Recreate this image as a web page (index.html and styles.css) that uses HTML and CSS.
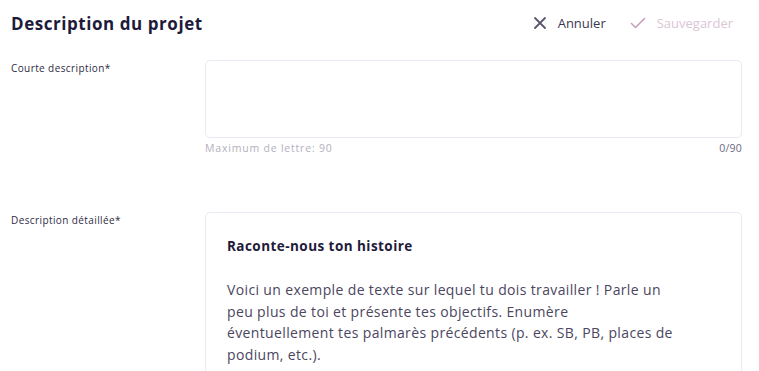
FILE: index.html
```html
<!DOCTYPE html>
<html lang="fr">
<head>
<meta charset="utf-8">
<title>Description du projet</title>
<link rel="stylesheet" href="styles.css">
</head>
<body>
<div class="page">
  <header class="header">
    <h1 class="title">Description du projet</h1>
    <div class="actions">
      <button class="action action-cancel" type="button">
        <svg class="icon" width="14" height="14" viewBox="0 0 14 14"><path d="M2 2 L12 12 M12 2 L2 12" stroke="currentColor" stroke-width="1.8" fill="none" stroke-linecap="round"/></svg>
        <span>Annuler</span>
      </button>
      <button class="action action-save" type="button">
        <svg class="icon icon-check" width="16" height="12" viewBox="0 0 16 12"><path d="M1.5 6.5 L5.5 10.5 L14.5 1.5" stroke="currentColor" stroke-width="1.6" fill="none" stroke-linecap="round" stroke-linejoin="round"/></svg>
        <span>Sauvegarder</span>
      </button>
    </div>
  </header>

  <section class="field field-short">
    <label class="label">Courte description*</label>
    <div class="control">
      <div class="box box-short"></div>
      <div class="hint">
        <span>Maximum de lettre: 90</span>
        <span class="counter">0/90</span>
      </div>
    </div>
  </section>

  <section class="field field-long">
    <label class="label">Description détaillée*</label>
    <div class="control">
      <div class="box box-long">
        <h2 class="story-title">Raconte-nous ton histoire</h2>
        <p class="story-text">Voici un exemple de texte sur lequel tu dois travailler ! Parle un<br>peu plus de toi et présente tes objectifs. Enumère<br>éventuellement tes palmarès précédents (p. ex. SB, PB, places de<br>podium, etc.).</p>
      </div>
    </div>
  </section>
</div>
</body>
</html>
```

FILE: styles.css
```css
* { box-sizing: border-box; }
html, body { margin: 0; padding: 0; background: #ffffff; }
body {
  font-family: "Open Sans", "DejaVu Sans", sans-serif;
  color: #2f2b45;
  overflow: hidden;
}
.page {
  padding: 0 17px 0 11px;
}
.header {
  display: flex;
  justify-content: space-between;
  align-items: center;
  height: 46px;
}
.title {
  margin: 0;
  font-size: 17px;
  font-weight: 700;
  color: #1e1b3a;
  letter-spacing: 0.55px;
}
.actions {
  display: flex;
  align-items: center;
  gap: 24px;
  padding-right: 9px;
}
.action {
  display: flex;
  align-items: center;
  gap: 11px;
  border: 0;
  background: none;
  padding: 0;
  font-family: inherit;
  font-size: 13px;
  cursor: pointer;
}
.action-cancel { color: #3b3752; }
.action-cancel .icon { color: #5b566f; }
.action-save { color: #dcc5d4; }
.action-save .icon { color: #c79fb8; }
.field {
  display: grid;
  grid-template-columns: 194px 1fr;
}
.field-short { margin-top: 14px; }
.field-long { margin-top: 57px; }
.label {
  font-size: 10px;
  color: #2f2b45;
  letter-spacing: 0.4px;
  padding-top: 1px;
}
.box {
  border: 1px solid #ebe9f1;
  border-radius: 5px;
  background: #fff;
}
.box-short { height: 78px; }
.hint {
  display: flex;
  justify-content: space-between;
  font-size: 10.5px;
  letter-spacing: 0.8px;
  color: #b3b0bd;
  margin-top: 3px;
}
.counter { color: #6c6880; letter-spacing: 0.2px; }
.box-long {
  padding: 24px 21px 30px;
  height: 200px;
}
.story-title {
  margin: 0;
  font-size: 13.5px;
  font-weight: 700;
  color: #1e1b3a;
  letter-spacing: 0.45px;
}
.story-text {
  margin: 24px 0 0;
  font-size: 14px;
  line-height: 21.7px;
  letter-spacing: 0.36px;
  color: #4b4660;
}
```
